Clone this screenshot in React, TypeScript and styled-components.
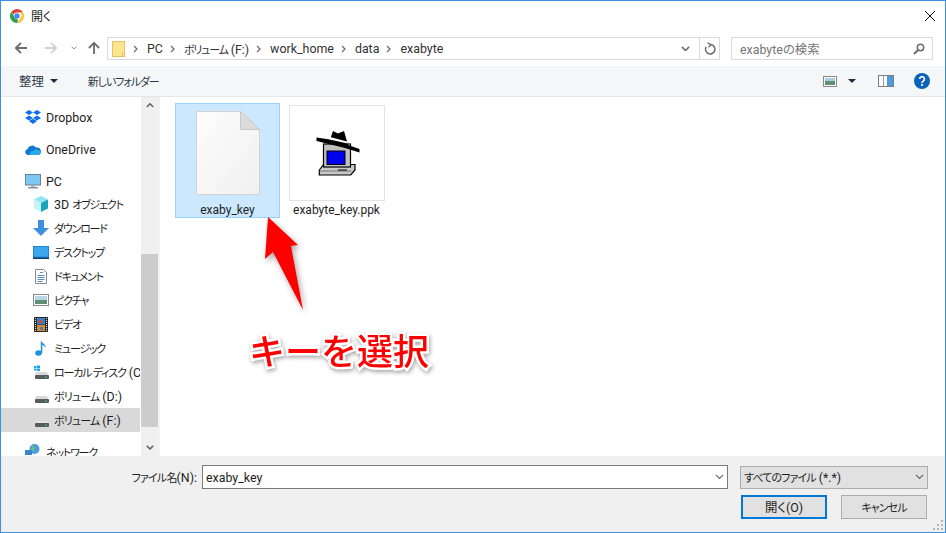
import React from "react";
import styled, { createGlobalStyle } from "styled-components";

const Global = createGlobalStyle`
  html, body { margin: 0; padding: 0; background: #fff; }
  * { box-sizing: border-box; }
`;

const FONT = `Roboto, "Noto Sans CJK JP", sans-serif`;

const Window = styled.div`
  position: relative;
  width: 946px;
  height: 533px;
  border: 1px solid #3c91e6;
  background: #fff;
  display: flex;
  flex-direction: column;
  overflow: hidden;
  font-family: ${FONT};
  font-size: 12.4px;
  font-feature-settings: "palt";
  color: #1e1e1e;
`;
const Kana = styled.span<{ $tight?: number }>`
  font-size: 11px;
  letter-spacing: ${(p) => p.$tight ?? -1.2}px;
`;
const TitleBar = styled.div`
  height: 29px;
  display: flex;
  align-items: center;
  padding: 0 10px 0 9px;
  gap: 7px;
  flex: none;
`;
const TitleText = styled.span`
  flex: 1;
  font-size: 12px;
`;
const AddressRow = styled.div`
  height: 36px;
  flex: none;
  display: flex;
  align-items: flex-start;
  padding: 7px 12px 0 12px;
`;
const NavGroup = styled.div`
  width: 94px;
  height: 22px;
  display: flex;
  align-items: center;
`;
const NavSlot = styled.span<{ $ml: number }>`
  margin-left: ${(p) => p.$ml}px;
  display: flex;
  align-items: center;
`;
const AddressBox = styled.div`
  width: 613px;
  height: 23px;
  border: 1px solid #d9d9d9;
  display: flex;
  align-items: center;
  padding-left: 4px;
  color: #333;
`;
const Crumbs = styled.div`
  flex: 1;
  display: flex;
  align-items: center;
  gap: 7px;
  padding-left: 8px;
  white-space: nowrap;
`;
const CrumbSep = styled.span`
  display: flex;
  margin-right: 2px;
`;
const AddressEnd = styled.span<{ $w: number; $line?: boolean }>`
  width: ${(p) => p.$w}px;
  height: 21px;
  display: flex;
  align-items: center;
  justify-content: center;
  border-left: ${(p) => (p.$line ? "1px solid #d9d9d9" : "none")};
`;
const SearchBox = styled.div`
  width: 202px;
  height: 23px;
  margin-left: 11px;
  border: 1px solid #d9d9d9;
  display: flex;
  align-items: center;
  justify-content: space-between;
  padding: 0 7px 0 8px;
  color: #767676;
`;
const Toolbar = styled.div`
  height: 31px;
  flex: none;
  background: #f5f6f7;
  border-bottom: 1px solid #e6e6e6;
  display: flex;
  align-items: center;
  padding: 0 15px 0 18px;
`;
const ToolText = styled.span`
  color: #2b3a4a;
`;
const Caret = styled.span<{ $ml: number }>`
  width: 0;
  height: 0;
  margin-left: ${(p) => p.$ml}px;
  border-left: 4px solid transparent;
  border-right: 4px solid transparent;
  border-top: 4px solid #1c2c44;
`;
const NewFolder = styled(ToolText)`
  margin-left: 30px;
  flex: 1;
`;
const ToolIcon = styled.span<{ $ml: number }>`
  margin-left: ${(p) => p.$ml}px;
  display: flex;
`;
const Main = styled.div`
  flex: 1;
  min-height: 0;
  display: flex;
`;
const Sidebar = styled.nav`
  width: 139px;
  flex: none;
  overflow: hidden;
  padding-top: 8px;
`;
const NavRow = styled.div<{ $child?: boolean; $sel?: boolean; $gap?: number }>`
  height: 24px;
  display: flex;
  align-items: center;
  white-space: pre;
  overflow: hidden;
  margin-top: ${(p) => p.$gap ?? 0}px;
  padding-left: ${(p) => (p.$child ? 32 : 24)}px;
  background: ${(p) => (p.$sel ? "#d9d9d9" : "transparent")};
  color: #1e1e1e;
`;
const NavIcon = styled.span`
  width: 16px;
  height: 16px;
  margin-right: 5px;
  flex: none;
  display: flex;
  align-items: center;
  justify-content: center;
`;
const Scrollbar = styled.div`
  width: 17px;
  flex: none;
  margin-left: 1px;
  background: #f0f0f0;
  display: flex;
  flex-direction: column;
`;
const ScrollBtn = styled.span`
  height: 17px;
  flex: none;
  display: flex;
  align-items: center;
  justify-content: center;
`;
const ScrollTrack = styled.div`
  flex: 1;
  padding-top: 140px;
  padding-bottom: 12px;
  display: flex;
`;
const ScrollThumb = styled.div`
  flex: 1;
  background: #cdcdcd;
`;
const Files = styled.div`
  flex: 1;
  border-left: 2px solid #f2f2f2;
  padding: 6px 0 0 15px;
  display: flex;
  align-items: flex-start;
  gap: 4px;
`;
const Tile = styled.div<{ $sel?: boolean }>`
  width: 105px;
  height: 115px;
  display: flex;
  flex-direction: column;
  align-items: center;
  background: ${(p) => (p.$sel ? "#cce8ff" : "transparent")};
  border: 1px solid ${(p) => (p.$sel ? "#99d1ff" : "transparent")};
`;
const Thumb = styled.div<{ $framed?: boolean }>`
  width: 96px;
  height: 96px;
  flex: none;
  margin-top: 1px;
  border: ${(p) => (p.$framed ? "1px solid #e3e3e3" : "none")};
  background: ${(p) => (p.$framed ? "#fff" : "transparent")};
  display: flex;
  align-items: center;
  justify-content: center;
`;
const TileLabel = styled.div`
  margin-top: 1px;
  font-size: 12px;
  line-height: 16px;
  color: #1e1e1e;
`;
const Bottom = styled.div`
  height: 76px;
  flex: none;
  background: #f0f0f0;
  padding: 9px 17px 0 0;
  position: relative;
`;
const FieldRow = styled.div`
  display: flex;
  align-items: center;
  justify-content: flex-end;
`;
const FieldLabel = styled.span`
  margin-right: 5px;
  color: #1e1e1e;
`;
const NameInput = styled.div`
  width: 526px;
  height: 24px;
  background: #fff;
  border: 1px solid #7a7a7a;
  display: flex;
  align-items: center;
  justify-content: space-between;
  padding: 0 3px 0 3px;
`;
const TypeSelect = styled.div`
  width: 188px;
  height: 23px;
  margin-left: 12px;
  background: #e1e1e1;
  border: 1px solid #adadad;
  display: flex;
  align-items: center;
  justify-content: space-between;
  padding: 0 3px 0 3px;
`;
const ButtonRow = styled.div`
  display: flex;
  justify-content: flex-end;
  gap: 14px;
  margin: 6px 1px 0 0;
`;
const Button = styled.div<{ $primary?: boolean }>`
  width: 86px;
  height: 24px;
  background: #e1e1e1;
  border: ${(p) => (p.$primary ? "2px solid #0078d7" : "1px solid #adadad")};
  display: flex;
  align-items: center;
  justify-content: center;
`;
const Grip = styled.span`
  position: absolute;
  right: 1px;
  bottom: 1px;
  display: flex;
`;
const Callout = styled.svg`
  position: absolute;
  left: 255px;
  top: 207px;
  overflow: visible;
  filter: drop-shadow(2px 3px 3px rgba(0, 0, 0, 0.35));
`;
const CalloutText = styled.div`
  position: absolute;
  left: 248px;
  top: 322px;
  font-family: "Noto Sans CJK JP", sans-serif;
  font-feature-settings: normal;
  font-size: 36px;
  line-height: 52px;
  font-weight: 500;
  white-space: nowrap;
  color: #ff0000;
  -webkit-text-stroke: 5px #fff;
  paint-order: stroke fill;
  filter: drop-shadow(1px 2px 2px rgba(0, 0, 0, 0.35));
`;

const Chrome = () => (
  <svg width="14" height="14" viewBox="0 0 14 14">
    <path d="M7 0a7 7 0 0 1 6.1 3.5H7a3.5 3.5 0 0 0-3.3 2.3L1.4 2.8A7 7 0 0 1 7 0z" fill="#e0433a" />
    <path d="M13.1 3.5A7 7 0 0 1 7.4 14l3-5.2a3.5 3.5 0 0 0-.2-5.3z" fill="#fbc52f" />
    <path d="M7.4 14A7 7 0 0 1 1.4 2.8l3 5.2A3.5 3.5 0 0 0 8 10.4z" fill="#2f9f51" />
    <circle cx="7" cy="7" r="2.7" fill="#4a89f3" />
  </svg>
);
const CloseX = () => (
  <svg width="10" height="10" viewBox="0 0 10 10">
    <path d="M0 0l10 10M10 0L0 10" stroke="#111" strokeWidth="1" />
  </svg>
);
const ArrowNav = ({ dir, color }: { dir: "l" | "r" | "u"; color: string }) => {
  const r = dir === "l" ? 0 : dir === "r" ? 180 : 90;
  return (
    <svg width="12" height="12" viewBox="0 0 13 13" style={{ transform: `rotate(${r}deg)` }}>
      <path d="M1 6.5h12M6.5 1L1 6.5 6.5 12" stroke={color} strokeWidth="2" fill="none" />
    </svg>
  );
};
const Chev = ({ color = "#6d6d6d", w = 8, up = false, sw = 1.5 }: { color?: string; w?: number; up?: boolean; sw?: number }) => (
  <svg width={w} height={w * 0.6} viewBox="0 0 10 6" style={up ? { transform: "rotate(180deg)" } : undefined}>
    <path d="M1 1l4 4 4-4" stroke={color} strokeWidth={sw} fill="none" />
  </svg>
);
const Sep = () => (
  <svg width="5" height="8" viewBox="0 0 5 8">
    <path d="M1 1l3 3-3 3" stroke="#6d6d6d" strokeWidth="1.3" fill="none" />
  </svg>
);
const Folder = () => (
  <svg width="13" height="16" viewBox="0 0 13 16">
    <rect x="0.5" y="0.5" width="12" height="15" fill="#fde58f" stroke="#e5c365" />
    <path d="M10.5 11v4.5" stroke="#e5c365" />
  </svg>
);
const Refresh = () => (
  <svg width="12" height="13" viewBox="0 0 12 13">
    <path d="M7 2.6A4.7 4.7 0 1 1 2.2 4.8" stroke="#6b6b6b" strokeWidth="1.5" fill="none" />
    <path d="M3.5 .8L7 2.6 4.5 5.2" stroke="#6b6b6b" strokeWidth="1.3" fill="none" />
  </svg>
);
const Magnifier = () => (
  <svg width="12" height="12" viewBox="0 0 12 12">
    <circle cx="7.5" cy="4.5" r="3.2" stroke="#6d6d6d" strokeWidth="1.5" fill="none" />
    <path d="M5 7L1 11" stroke="#6d6d6d" strokeWidth="2" />
  </svg>
);
const ViewIcon = () => (
  <svg width="14" height="11" viewBox="0 0 14 11">
    <rect x="0.5" y="0.5" width="13" height="10" fill="#fff" stroke="#8a8a8a" />
    <rect x="2" y="2" width="10" height="3" fill="#a9cde2" />
    <rect x="2" y="5" width="10" height="4" fill="#5f9077" />
  </svg>
);
const PaneIcon = () => (
  <svg width="16" height="12" viewBox="0 0 16 12">
    <rect x="0.5" y="0.5" width="15" height="11" fill="#fff" stroke="#7d7d7d" />
    <path d="M5.5 1v10" stroke="#9a9a9a" />
    <rect x="9" y="1" width="6" height="10" fill="#4a9be0" />
  </svg>
);
const HelpIcon = () => (
  <svg width="16" height="16" viewBox="0 0 16 16">
    <circle cx="8" cy="8" r="8" fill="#0a63b8" />
    <path d="M5.6 6a2.4 2.4 0 1 1 3.6 2.1c-.8.5-1.2.9-1.2 1.9" stroke="#fff" strokeWidth="1.7" fill="none" />
    <rect x="7.1" y="11" width="1.8" height="1.9" fill="#fff" />
  </svg>
);
const Dropbox = () => (
  <svg width="16" height="15" viewBox="0 0 16 15" fill="#0f6fe8">
    <path d="M4 0l4 2.5L4 5 0 2.5zM12 0l4 2.5L12 5 8 2.5zM4 5.4l4 2.5-4 2.5-4-2.5zM12 5.4l4 2.5-4 2.5-4-2.5zM4 11l4-2.3 4 2.3-4 3z" />
  </svg>
);
const OneDrive = () => (
  <svg width="16" height="11" viewBox="0 0 16 11">
    <path d="M3 11a3 3 0 0 1-.5-5.9A4.8 4.8 0 0 1 11 3.6 3.6 3.6 0 0 1 13 11z" fill="#0f78d4" />
    <path d="M5 11c-1-2 .5-4 3-4 1-2 5-2.500 8 1 0 1.500-1 3-3 3z" fill="#29a8ea" />
  </svg>
);
const PcIcon = () => (
  <svg width="16" height="15" viewBox="0 0 16 15">
    <rect x="0.5" y="0.5" width="15" height="10.500" fill="#7cc7f3" stroke="#6c8194" />
    <rect x="6" y="11" width="4" height="2" fill="#a8b5c0" />
    <rect x="3" y="13" width="10" height="1.500" fill="#8496a5" />
  </svg>
);
const CubeIcon = () => (
  <svg width="16" height="16" viewBox="0 0 16 16">
    <path d="M8 0l7 3.500L8 7 1 3.500z" fill="#8ee6f0" />
    <path d="M1 3.500L8 7v9l-7-3.500z" fill="#c9f2f5" />
    <path d="M15 3.500L8 7v9l7-3.500z" fill="#16a5b8" />
  </svg>
);
const DownIcon = () => (
  <svg width="16" height="16" viewBox="0 0 16 16">
    <path d="M5 0h6v8h5l-8 8-8-8h5z" fill="#3e90dc" />
  </svg>
);
const DesktopIcon = () => (
  <svg width="16" height="13" viewBox="0 0 16 13">
    <rect x="0" y="0" width="16" height="12" fill="#1e88d8" />
    <rect x="1" y="1" width="14" height="9.500" fill="#3ea6ee" />
    <rect x="0" y="11.500" width="16" height="1.500" fill="#123f66" />
  </svg>
);
const DocIcon = () => (
  <svg width="12" height="15" viewBox="0 0 12 15">
    <path d="M.5.500h8l3 3v11H.5z" fill="#fff" stroke="#8a8a8a" />
    <path d="M5 3.500h3M2.500 6.500h7M2.500 8.500h7M2.500 10.500h7M2.500 12.500h5" stroke="#5c8fbc" />
  </svg>
);
const PicIcon = () => (
  <svg width="16" height="12" viewBox="0 0 16 12">
    <rect x="0.5" y="0.5" width="15" height="11" fill="#fff" stroke="#8c8c8c" />
    <rect x="2" y="2" width="12" height="4" fill="#b7d6e8" />
    <rect x="2" y="6" width="12" height="4" fill="#5f9077" />
  </svg>
);
const FilmIcon = () => (
  <svg width="14" height="15" viewBox="0 0 14 15">
    <rect width="14" height="15" fill="#2a2a2a" />
    <rect x="3" y="1" width="8" height="6.500" fill="#3e7fc4" />
    <rect x="3" y="8" width="8" height="6" fill="#d68a2e" />
    <rect x="5" y="3" width="3" height="3" fill="#c94a3a" />
    <rect x="6" y="10" width="3" height="3" fill="#3e7fc4" />
    <path d="M1.500 1v13M12.500 1v13" stroke="#ddd" strokeDasharray="1 1" />
  </svg>
);
const NoteIcon = () => (
  <svg width="12" height="16" viewBox="0 0 12 16">
    <ellipse cx="3.500" cy="13" rx="3.300" ry="2.800" fill="#1f8fe0" />
    <path d="M5.800 13V0c.5 3 5 3.500 5 8-1-2-2.500-3-3.500-3v8z" fill="#1f8fe0" />
  </svg>
);
const DriveIcon = ({ win, dark }: { win?: boolean; dark?: boolean }) => (
  <svg width="15" height="15" viewBox="0 0 15 15">
    {win && <path d="M0 1h2.500v2H0zM3 .5h3v2.500H3zM0 3.500h2.500v2H0zM3 3.500h3V6H3z" fill="#19a3e8" />}
    {!dark && <path d="M2 7h11l1 3H1z" fill="#d9d9d9" />}
    {dark && <path d="M2 8h11l1 2H1z" fill="#e2e2e2" />}
    <rect x="1" y="10" width="14" height="4" rx="1" fill="#555d63" />
    <rect x="11" y="11.500" width="2" height="1" fill="#58d858" />
  </svg>
);
const NetIcon = () => (
  <svg width="16" height="16" viewBox="0 0 16 16">
    <circle cx="9.500" cy="5" r="5" fill="#4b9edc" />
    <path d="M7 2c2 0 3 1 2.500 3S7 8 6 6z" fill="#6cbf7a" />
    <rect x="0" y="6" width="7" height="5" fill="#3c85c7" />
    <rect x="1" y="12" width="14" height="3" fill="#6d8aa3" />
  </svg>
);
const BlankFile = () => (
  <svg width="64" height="84" viewBox="0 0 64 84">
    <defs>
      <linearGradient id="pg" x1="0" y1="0" x2="1" y2="1">
        <stop offset="0" stopColor="#fdfdfd" />
        <stop offset="1" stopColor="#f0f0f0" />
      </linearGradient>
    </defs>
    <path d="M.5.500h44l19 18v65H.5z" fill="url(#pg)" stroke="#d2d2d2" />
    <path d="M44.500.500v18h19z" fill="#dcdcdc" stroke="#c8c8c8" />
  </svg>
);
const PuttyKey = () => (
  <svg width="46" height="48" viewBox="0 0 46 48">
    <path d="M5.300 41L9.500 35.500H41V41L36.700 46H5.300z" fill="#c8c8c8" stroke="#000" strokeWidth="1.200" />
    <path d="M5.800 42H37" stroke="#777" />
    <path d="M24 41h9" stroke="#000" />
    <rect x="9.500" y="15" width="27" height="23" fill="#c0c0c0" stroke="#000" strokeWidth="1.200" />
    <rect x="13" y="22" width="18" height="13.500" fill="#0000f0" stroke="#000" />
    <path d="M2.500 8.500L16 10.500 19 2l5 2.500L30 2l4 14 11.500 4v3.500L31 19 2.500 12z" fill="#000" />
    <path d="M16 8l17 4.500.5 2L15.500 10.500z" fill="#fff" />
  </svg>
);
const GripIcon = () => (
  <svg width="11" height="11" viewBox="0 0 11 11" fill="#b5b5b5">
    <path d="M8 0h2v2H8zM4 4h2v2H4zM8 4h2v2H8zM0 8h2v2H0zM4 8h2v2H4zM8 8h2v2H8z" />
  </svg>
);

export default function App() {
  return (
    <Window>
      <Global />
      <TitleBar>
        <Chrome />
        <TitleText>開く</TitleText>
        <CloseX />
      </TitleBar>
      <AddressRow>
        <NavGroup>
          <NavSlot $ml={2}><ArrowNav dir="l" color="#6d6d6d" /></NavSlot>
          <NavSlot $ml={18}><ArrowNav dir="r" color="#d3d3d3" /></NavSlot>
          <NavSlot $ml={14}><Chev color="#8a8a8a" w={6} /></NavSlot>
          <NavSlot $ml={11}><ArrowNav dir="u" color="#6d6d6d" /></NavSlot>
        </NavGroup>
        <AddressBox>
          <Folder />
          <Crumbs>
            <CrumbSep><Sep /></CrumbSep>
            <span>PC</span>
            <CrumbSep><Sep /></CrumbSep>
            <span><Kana $tight={-1.2}>ボリューム</Kana> (F:)</span>
            <CrumbSep><Sep /></CrumbSep>
            <span>work_home</span>
            <CrumbSep><Sep /></CrumbSep>
            <span>data</span>
            <CrumbSep><Sep /></CrumbSep>
            <span>exabyte</span>
          </Crumbs>
          <AddressEnd $w={12}><Chev color="#6d6d6d" w={9} sw={1.8} /></AddressEnd>
          <AddressEnd $w={8} />
          <AddressEnd $w={20} $line><Refresh /></AddressEnd>
        </AddressBox>
        <SearchBox>
          <span>exabyteの検索</span>
          <Magnifier />
        </SearchBox>
      </AddressRow>
      <Toolbar>
        <ToolText>整理</ToolText>
        <Caret $ml={6} />
        <NewFolder><Kana $tight={-1.1}>新しいフォルダー</Kana></NewFolder>
        <ToolIcon $ml={0}><ViewIcon /></ToolIcon>
        <Caret $ml={11} />
        <ToolIcon $ml={22}><PaneIcon /></ToolIcon>
        <ToolIcon $ml={20}><HelpIcon /></ToolIcon>
      </Toolbar>
      <Main>
        <Sidebar>
          <NavRow><NavIcon><Dropbox /></NavIcon>Dropbox</NavRow>
          <NavRow $gap={8}><NavIcon><OneDrive /></NavIcon>OneDrive</NavRow>
          <NavRow $gap={8}><NavIcon><PcIcon /></NavIcon>PC</NavRow>
          <NavRow $child $gap={-1}><NavIcon><CubeIcon /></NavIcon><span>3D <Kana>オブジェクト</Kana></span></NavRow>
          <NavRow $child><NavIcon><DownIcon /></NavIcon><Kana>ダウンロード</Kana></NavRow>
          <NavRow $child><NavIcon><DesktopIcon /></NavIcon><Kana>デスクトップ</Kana></NavRow>
          <NavRow $child><NavIcon><DocIcon /></NavIcon><Kana>ドキュメント</Kana></NavRow>
          <NavRow $child><NavIcon><PicIcon /></NavIcon><Kana>ピクチャ</Kana></NavRow>
          <NavRow $child><NavIcon><FilmIcon /></NavIcon><Kana>ビデオ</Kana></NavRow>
          <NavRow $child><NavIcon><NoteIcon /></NavIcon><Kana>ミュージック</Kana></NavRow>
          <NavRow $child><NavIcon><DriveIcon win /></NavIcon><span><Kana>ローカル ディスク</Kana> (C:)</span></NavRow>
          <NavRow $child><NavIcon><DriveIcon /></NavIcon><span><Kana $tight={-0.9}>ボリューム</Kana> (D:)</span></NavRow>
          <NavRow $child $sel><NavIcon><DriveIcon dark /></NavIcon><span><Kana $tight={-0.9}>ボリューム</Kana> (F:)</span></NavRow>
          <NavRow $gap={8}><NavIcon><NetIcon /></NavIcon><Kana>ネットワーク</Kana></NavRow>
        </Sidebar>
        <Scrollbar>
          <ScrollBtn><Chev color="#606060" w={8} up sw={2} /></ScrollBtn>
          <ScrollTrack><ScrollThumb /></ScrollTrack>
          <ScrollBtn><Chev color="#606060" w={8} sw={2} /></ScrollBtn>
        </Scrollbar>
        <Files>
          <Tile $sel>
            <Thumb><BlankFile /></Thumb>
            <TileLabel>exaby_key</TileLabel>
          </Tile>
          <Tile>
            <Thumb $framed><PuttyKey /></Thumb>
            <TileLabel>exabyte_key.ppk</TileLabel>
          </Tile>
        </Files>
      </Main>
      <Bottom>
        <FieldRow>
          <FieldLabel><Kana $tight={-0.8}>ファイル名</Kana>(N):</FieldLabel>
          <NameInput>
            <span>exaby_key</span>
            <Chev color="#606060" w={9} sw={1.2} />
          </NameInput>
          <TypeSelect>
            <span><Kana $tight={-0.9}>すべてのファイル</Kana> (*.*)</span>
            <Chev color="#606060" w={9} sw={1.2} />
          </TypeSelect>
        </FieldRow>
        <ButtonRow>
          <Button $primary>開く(O)</Button>
          <Button><Kana $tight={-0.9}>キャンセル</Kana></Button>
        </ButtonRow>
        <Grip><GripIcon /></Grip>
      </Bottom>
      <Callout width="50" height="105" viewBox="0 0 50 105">
        <path d="M12 9l30 28-7 1 12 64L17 44l-8 7z" fill="#ff0000" />
      </Callout>
      <CalloutText>キーを選択</CalloutText>
    </Window>
  );
}
